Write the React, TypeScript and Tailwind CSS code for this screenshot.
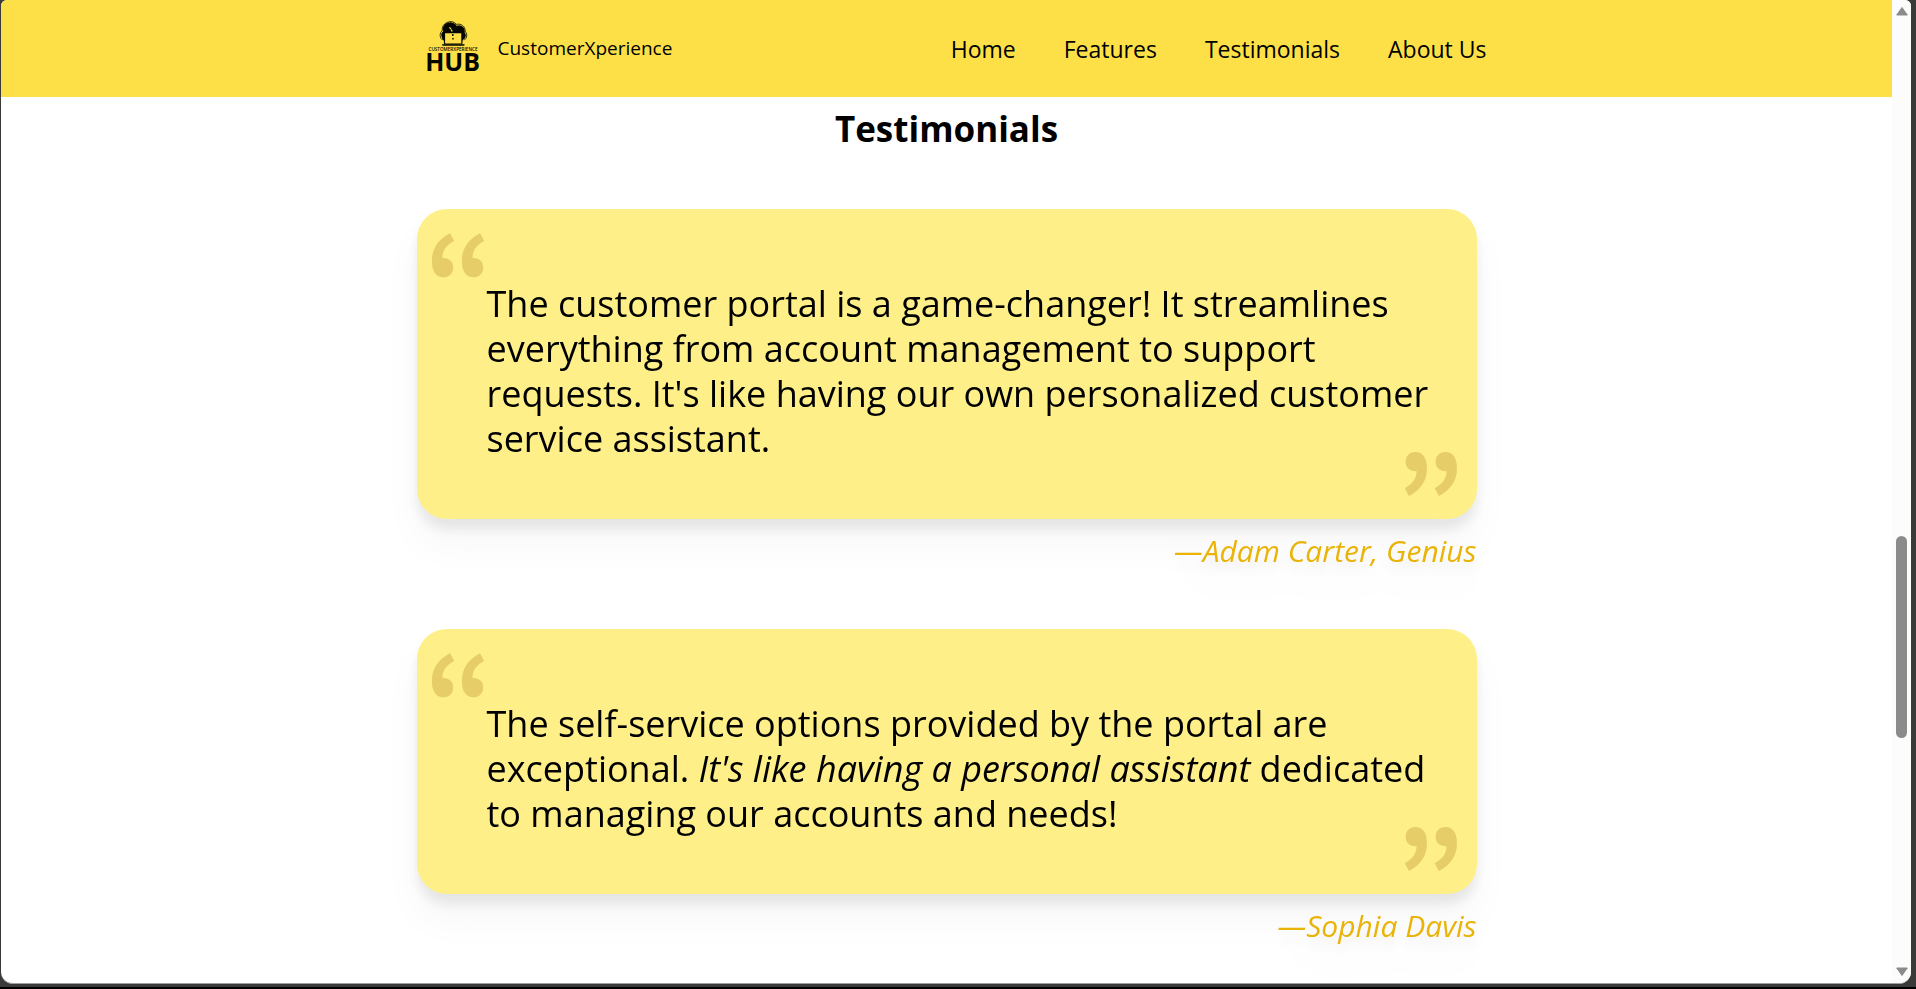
import type { ReactNode } from "react";

const links = ["Home", "Features", "Testimonials", "About Us"];

function Logo() {
  return (
    <svg viewBox="0 0 75 77" className="h-[77px] w-[75px]" role="img" aria-label="CustomerXperience Hub">
      <g fill="#050500">
        <circle cx="35.2" cy="19.6" r="7.4" />
        <circle cx="44" cy="21" r="5.8" />
        <circle cx="30.4" cy="25" r="4.2" />
        <circle cx="46.6" cy="25.5" r="4.2" />
        <rect x="27" y="22" width="22" height="9" rx="4" />
      </g>
      <path
        d="M27.8 30.2a6 6 0 0 1-.6-9.6 8.3 8.3 0 0 1 14.4-6.2 6.7 6.7 0 0 1 8.6 6.8 6 6 0 0 1-1 9"
        fill="none"
        stroke="#050500"
        strokeWidth="0.8"
      />
      <rect x="29.5" y="22.7" width="17.4" height="11.3" rx="0.8" fill="#fde047" stroke="#050500" strokeWidth="1.2" />
      <path d="M27 34.2h22.6v0.6q0 1-1.2 1H28.2q-1.2 0-1.2-1z" fill="#050500" />
      <path d="M34.4 17.4l1.6 1.6M36.2 19.4l1 2" stroke="#fde047" strokeWidth="1.2" />
      <path d="M37.8 24v2M38 28v1.6" stroke="#050500" strokeWidth="1.4" />
      <text x="38" y="41.2" textAnchor="middle" fontSize="4.6" fontWeight="600" fill="#050500">
        CUSTOMERXPERIENCE
      </text>
      <text x="37.6" y="61" textAnchor="middle" fontSize="25" fontWeight="700" fill="#050500">
        HUB
      </text>
    </svg>
  );
}

const markClass =
  "absolute font-['Noto_Sans_CJK_JP',sans-serif] text-[120px] leading-[120px] font-bold text-[#e6cd68]";

function Testimonial({ author, children }: { author: string; children: ReactNode }) {
  return (
    <figure className="[filter:drop-shadow(0_25px_16px_rgb(0_0_0/0.03))_drop-shadow(0_10px_6px_rgb(0_0_0/0.08))]">
      <blockquote className="relative rounded-[30px] bg-[#feef89] pt-[72px] pr-10 pb-[58px] pl-[70px] text-4xl leading-[45px]">
        <span aria-hidden="true" className={`top-1.5 left-2 ${markClass}`}>
          “
        </span>
        <p>{children}</p>
        <span aria-hidden="true" className={`right-3 -bottom-9 ${markClass}`}>
          ”
        </span>
      </blockquote>
      <figcaption className="mt-3 text-right text-3xl leading-10 text-[#eab308] italic">—{author}</figcaption>
    </figure>
  );
}

function Scrollbar() {
  return (
    <div aria-hidden="true" className="flex w-[19px] shrink-0 flex-col items-center bg-[#fcfcfc] py-[7px]">
      <svg viewBox="0 0 12 9" className="h-[9px] w-3">
        <path d="M6 .5 11.3 8H.7z" fill="#8b8b8b" stroke="#8b8b8b" strokeLinejoin="round" />
      </svg>
      <div className="flex min-h-0 flex-1 flex-col items-center">
        <div className="grow-[520]" />
        <div className="h-[21.3%] w-[11px] rounded-full bg-[#8b8b8b]" />
        <div className="grow-[229]" />
      </div>
      <svg viewBox="0 0 12 9" className="h-[9px] w-3">
        <path d="M6 8.5.7 1h10.6z" fill="#8b8b8b" stroke="#8b8b8b" strokeLinejoin="round" />
      </svg>
    </div>
  );
}

export default function App() {
  return (
    <div className="flex h-screen flex-col border-b-2 border-black bg-[#3a3a38] pr-[5px] pb-[3px] pl-px font-['Open_Sans',sans-serif] text-black">
      <div className="flex min-h-0 flex-1 overflow-hidden rounded-t-md rounded-b-xl border-b border-[#a0a0a0] bg-white">
        <div className="min-w-0 flex-1 overflow-hidden">
          <header className="bg-[#fde047]">
            <nav className="mx-auto flex h-[97px] max-w-[1080px] items-center justify-between" aria-label="Main">
              <a href="#home" className="flex items-center gap-2 pl-2 text-[19px]">
                <Logo />
                CustomerXperience
              </a>
              <ul className="flex gap-12 pt-0.5 text-[23px]">
                {links.map((label) => (
                  <li key={label}>
                    <a href={`#${label.toLowerCase().replace(" ", "-")}`}>{label}</a>
                  </li>
                ))}
              </ul>
            </nav>
          </header>
          <main className="mx-auto max-w-[1060px]">
            <h1 className="pt-2 text-center text-[35px] leading-[48px] font-bold">Testimonials</h1>
            <div className="flex flex-col gap-[58px] pt-14">
              <Testimonial author="Adam Carter, Genius">
                The customer portal is a game-changer! It streamlines everything from account management to support
                requests. It's like having our own personalized customer service assistant.
              </Testimonial>
              <Testimonial author="Sophia Davis">
                The self-service options provided by the portal are exceptional.{" "}
                <em>It's like having a personal assistant</em> dedicated to managing our accounts and needs!
              </Testimonial>
            </div>
          </main>
        </div>
        <Scrollbar />
      </div>
    </div>
  );
}
